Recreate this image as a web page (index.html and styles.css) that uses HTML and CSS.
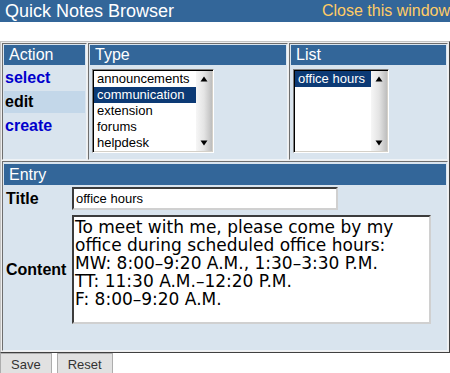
FILE: index.html
```html
<!DOCTYPE html>
<html>
<head>
<meta charset="utf-8">
<title>Quick Notes Browser</title>
<link rel="stylesheet" href="styles.css">
</head>
<body>
<div class="topbar">
  <span class="title">Quick Notes Browser</span>
  <a class="close" href="#">Close this window</a>
</div>
<div class="panel">
  <div class="cell action">
    <div class="bar">Action</div>
    <ul class="menu">
      <li class="item link">select</li>
      <li class="item current">edit</li>
      <li class="item link">create</li>
    </ul>
  </div>
  <div class="cell type">
    <div class="bar">Type</div>
    <div class="listbox type-box">
      <div class="options">
        <div class="opt">announcements</div>
        <div class="opt sel">communication</div>
        <div class="opt">extension</div>
        <div class="opt">forums</div>
        <div class="opt">helpdesk</div>
      </div>
      <div class="scroll">
        <svg class="arrow" width="16" height="16" viewBox="0 0 16 16"><path d="M4.5 10.5 L8 5.5 L11.5 10.5 Z" fill="#000"/></svg>
        <svg class="arrow" width="16" height="16" viewBox="0 0 16 16"><path d="M4.5 5.5 L8 10.5 L11.5 5.5 Z" fill="#000"/></svg>
      </div>
    </div>
  </div>
  <div class="cell list">
    <div class="bar">List</div>
    <div class="listbox list-box">
      <div class="options">
        <div class="opt sel">office hours</div>
      </div>
      <div class="scroll">
        <svg class="arrow" width="16" height="16" viewBox="0 0 16 16"><path d="M4.5 10.5 L8 5.5 L11.5 10.5 Z" fill="#000"/></svg>
        <svg class="arrow" width="16" height="16" viewBox="0 0 16 16"><path d="M4.5 5.5 L8 10.5 L11.5 5.5 Z" fill="#000"/></svg>
      </div>
    </div>
  </div>
  <div class="cell entry">
    <div class="bar entry-bar">Entry</div>
    <div class="form">
      <label class="lbl">Title</label>
      <input class="field title-field" type="text" value="office hours">
      <label class="lbl">Content</label>
      <textarea class="field content-field">To meet with me, please come by my office during scheduled office hours:
MW: 8:00–9:20 A.M., 1:30–3:30 P.M.
TT: 11:30 A.M.–12:20 P.M.
F: 8:00–9:20 A.M.</textarea>
    </div>
  </div>
</div>
<div class="buttons">
  <button class="btn">Save</button>
  <button class="btn">Reset</button>
</div>
</body>
</html>
```
FILE: styles.css
```css
html, body {
  margin: 0;
  padding: 0;
  background: #ffffff;
  font-family: "Liberation Sans", Arial, sans-serif;
  overflow: hidden;
}

.topbar {
  height: 22px;
  background: #336699;
  display: flex;
  justify-content: space-between;
  align-items: center;
  overflow: hidden;
  white-space: nowrap;
}

.title {
  color: #ffffff;
  font-size: 18px;
  padding-left: 5px;
}

.close {
  color: #ffcc66;
  font-size: 16px;
  text-decoration: none;
  margin-right: 0;
}

.panel {
  box-sizing: border-box;
  width: 450px;
  margin-top: 19px;
  border: 1px solid;
  border-color: #c4c4c4 #404040 #404040 #c4c4c4;
  padding: 1px;
  background: #eeeeee;
  display: grid;
  grid-template-columns: 85px 200px 159px;
  grid-template-rows: 117px 190px;
  gap: 1px;
}

.cell {
  border: 1px solid;
  border-color: #6e6e6e #eef2f6 #eef2f6 #6e6e6e;
  padding: 1px;
  background: #d9e4ee;
  min-width: 0;
}

.entry {
  grid-column: 1 / 4;
}

.bar {
  height: 20px;
  line-height: 20px;
  background: #336699;
  color: #ffffff;
  font-size: 16px;
  padding-left: 5px;
}

.entry-bar {
  height: 21px;
  line-height: 21px;
  margin-top: 1px;
}

.menu {
  list-style: none;
  margin: 0;
  padding: 2px 0 0 0;
  display: flex;
  flex-direction: column;
  gap: 2px;
}

.item {
  height: 22px;
  line-height: 22px;
  font-size: 16px;
  font-weight: bold;
  padding-left: 1px;
}

.link {
  color: #0000cc;
}

.current {
  color: #000000;
  background: #c3d7e9;
}

.listbox {
  box-sizing: border-box;
  margin: 4px 0 0 2px;
  height: 84px;
  display: flex;
  border: 1px solid;
  border-color: #808080 #ffffff #ffffff #808080;
  box-shadow: inset 1px 1px 0 #000000, inset -1px -1px 0 #d4d0c8;
  padding: 1px;
  background: #ffffff;
}

.type-box {
  width: 122px;
}

.list-box {
  width: 96px;
}

.options {
  flex: 1;
  min-width: 0;
  overflow: hidden;
}

.opt {
  height: 16px;
  line-height: 16px;
  font-size: 13px;
  color: #000000;
  padding-left: 3px;
  white-space: nowrap;
}

.opt.sel {
  background: #0c3a75;
  color: #ffffff;
}

.scroll {
  width: 16px;
  display: flex;
  flex-direction: column;
  justify-content: space-between;
  background: linear-gradient(to right, #f6f6f6 0%, #e4e4e4 50%, #bdbdbd 100%);
}

.arrow {
  display: block;
}

.form {
  display: grid;
  grid-template-columns: 68px 359px;
  grid-template-rows: 23px 109px;
  row-gap: 5px;
  padding-top: 2px;
  align-items: center;
}

.lbl {
  font-size: 16px;
  font-weight: bold;
  color: #000000;
  padding-left: 2px;
}

.field {
  box-sizing: border-box;
  margin: 0;
  border: 2px solid;
  border-color: #3c3c3c #d0d0d0 #d0d0d0 #3c3c3c;
  background: #ffffff;
  outline: none;
}

.title-field {
  width: 266px;
  height: 23px;
  font-family: "Liberation Sans", Arial, sans-serif;
  font-size: 13px;
  color: #000000;
  padding: 0 2px;
}

.content-field {
  width: 359px;
  height: 109px;
  font-family: "DejaVu Sans", Verdana, sans-serif;
  font-size: 17px;
  line-height: 18px;
  color: #000000;
  padding: 1px;
  resize: none;
  overflow: hidden;
}

.buttons {
  display: flex;
  gap: 5px;
  margin-top: 0;
}

.btn {
  height: 22px;
  font-family: "Liberation Sans", Arial, sans-serif;
  font-size: 13px;
  color: #333333;
  background: #e1e1e1;
  border: 1px solid #adadad;
  padding: 0 10px;
  margin: 0;
}
```
